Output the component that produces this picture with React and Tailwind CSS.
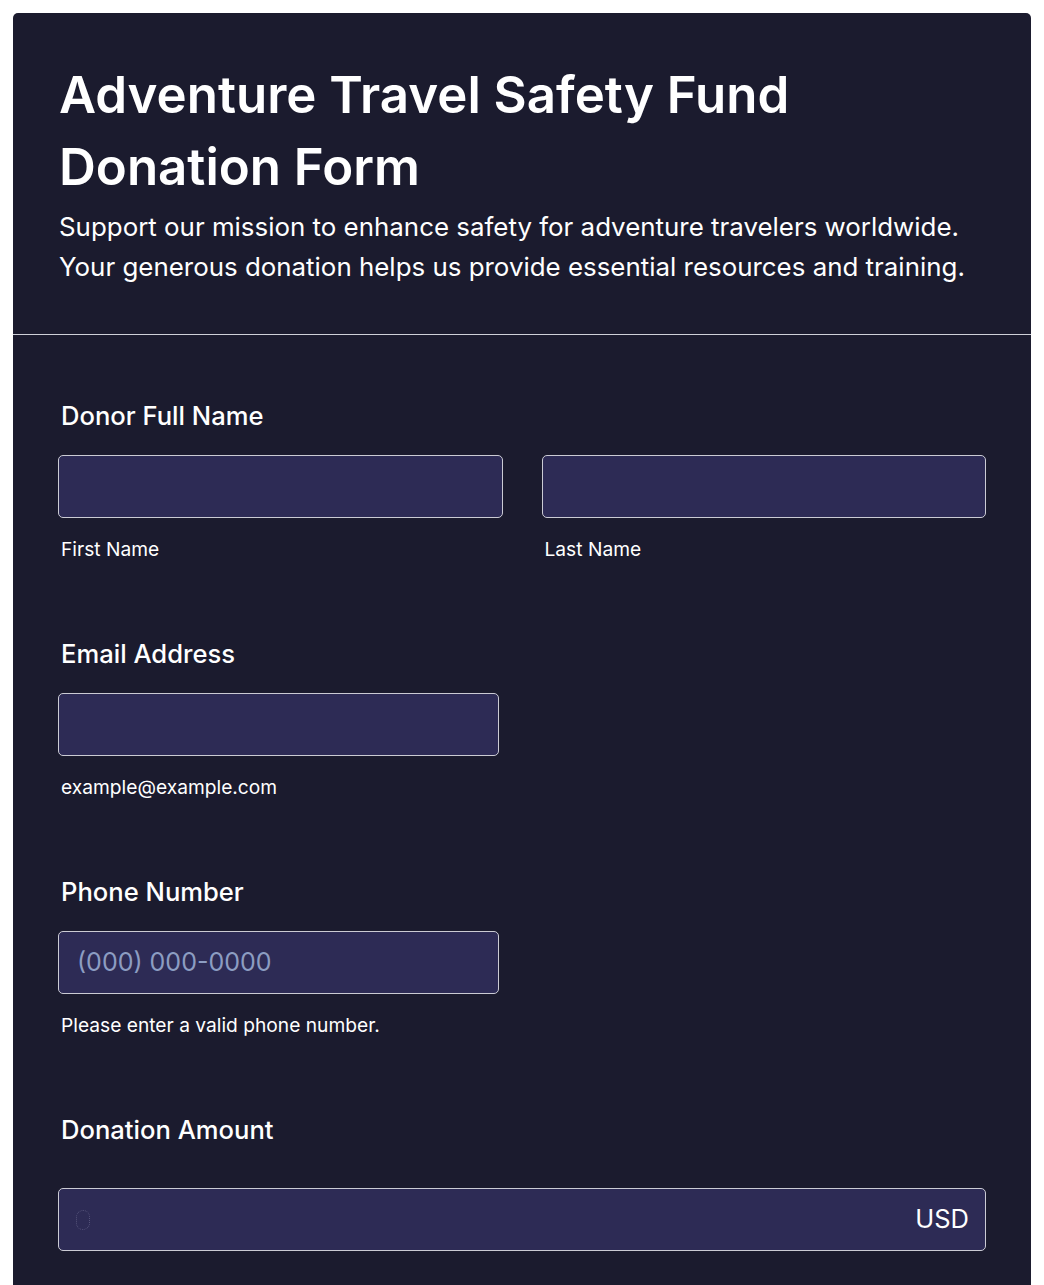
import React from 'react';

const font = { fontFamily: 'Inter, "Noto Sans", sans-serif' };

function Field({ label, children, gapClass = 'mt-[23px]' }) {
  return (
    <div className="flex flex-col">
      <label className="pl-[3px] text-[25.6px] leading-[32px] font-medium text-white">{label}</label>
      <div className={gapClass}>{children}</div>
    </div>
  );
}

function Input({ className = '', placeholder, right }) {
  return (
    <div className={`relative h-[63px] rounded-[5px] border border-[#cbcbd4] bg-[#2d2b55] flex items-center ${className}`}>
      {placeholder && (
        <span className="pl-[18px] text-[25px] text-[#8c9dc2]">{placeholder}</span>
      )}
      {right}
    </div>
  );
}

function Sub({ children }) {
  return <p className="mt-[19px] pl-[3px] text-[19.2px] leading-[24px] text-white">{children}</p>;
}

export default function App() {
  return (
    <div className="min-h-screen bg-white p-[13px] pb-0 [font-optical-sizing:none]" style={font}>
      <div className="w-[1018px] rounded-t-[5px] bg-[#1b1b2e] text-white">
        {/* Header */}
        <div className="px-[46px] pt-[46px] pb-[47px]">
          <h1 className="text-[51px] leading-[72px] font-semibold">
            Adventure Travel Safety Fund
            <br />
            Donation Form
          </h1>
          <p className="mt-[4px] text-[25.9px] leading-[40px]">
            Support our mission to enhance safety for adventure travelers worldwide.
            <br />
            Your generous donation helps us provide essential resources and training.
          </p>
        </div>

        <div className="h-px bg-[#cfd0d8]" />

        {/* Form */}
        <div className="px-[45px] pt-[65px] pb-[40px] flex flex-col gap-[77px]">
          <Field label="Donor Full Name">
            <div className="grid grid-cols-2 gap-[39px]">
              <div>
                <Input />
                <Sub>First Name</Sub>
              </div>
              <div>
                <Input />
                <Sub>Last Name</Sub>
              </div>
            </div>
          </Field>

          <Field label="Email Address">
            <Input className="w-[441px]" />
            <Sub>example@example.com</Sub>
          </Field>

          <Field label="Phone Number">
            <Input className="w-[441px]" placeholder="(000) 000-0000" />
            <Sub>Please enter a valid phone number.</Sub>
          </Field>

          <Field label="Donation Amount" gapClass="mt-[42px]">
            <Input
              right={
                <>
                  <span className="ml-[17px] h-[20px] w-[14px] rounded-full border border-dotted border-[#55537a]" />
                  <span className="ml-auto pr-[16px] text-[25.5px] text-white">USD</span>
                </>
              }
            />
          </Field>
        </div>
      </div>
    </div>
  );
}
